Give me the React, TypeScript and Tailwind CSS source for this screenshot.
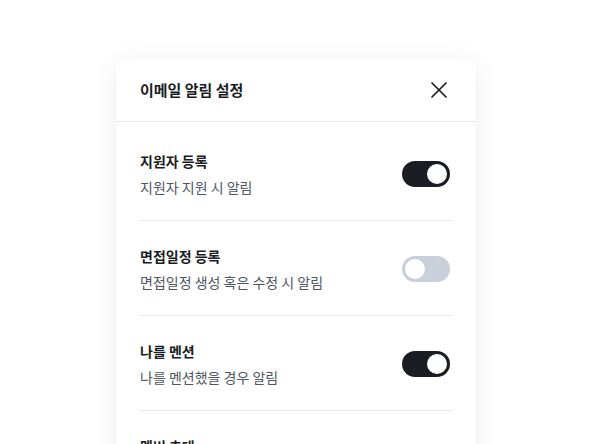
import { useState } from 'react'

type Item = { title: string; desc: string; on: boolean }

const items: Item[] = [
  { title: '지원자 등록', desc: '지원자 지원 시 알림', on: true },
  { title: '면접일정 등록', desc: '면접일정 생성 혹은 수정 시 알림', on: false },
  { title: '나를 멘션', desc: '나를 멘션했을 경우 알림', on: true },
  { title: '멤버 초대', desc: '멤버 초대 시 알림', on: true },
]

function Toggle({ on, onClick }: { on: boolean; onClick: () => void }) {
  return (
    <button
      onClick={onClick}
      className={`relative flex h-[26px] w-[48px] shrink-0 items-center rounded-full px-[1px] ${
        on ? 'justify-end bg-[#1a1d23]' : 'justify-start bg-[#c9d0da]'
      }`}
    >
      <span
        className={`block h-[24px] w-[24px] rounded-full bg-white border-2 ${
          on ? 'border-[#1a1d23]' : 'border-[#c9d0da]'
        }`}
      />
    </button>
  )
}

export default function App() {
  const [state, setState] = useState(items.map((i) => i.on))

  return (
    <div
      className="h-[444px] w-full overflow-hidden bg-white pt-[59px]"
      style={{ fontFamily: '"Noto Sans CJK KR", "Noto Sans", sans-serif' }}
    >
      <div className="mx-auto w-[360px] rounded-t-[10px] bg-white shadow-[0_4px_24px_rgba(0,0,0,0.08)] pb-10">
        {/* header */}
        <div className="flex h-[63px] items-center justify-between border-b border-[#e3e8ef] pl-6 pr-[28px]">
          <h2 className="text-[15px] font-bold text-[#1a1d23]">이메일 알림 설정</h2>
          <button className="text-[#1a1d23]">
            <svg width="18" height="18" viewBox="0 0 18 18" fill="none" stroke="currentColor" strokeWidth="1.7" strokeLinecap="round">
              <path d="M2 2L16 16M16 2L2 16" />
            </svg>
          </button>
        </div>

        {/* list */}
        <div className="px-6 pt-[4px]">
          {items.map((item, i) => (
            <div key={item.title} className="flex items-center justify-between border-b border-[#e3e8ef] pt-6 pb-[23px] pr-[2px]">
              <div>
                <div className="text-[14px] font-bold leading-[22px] text-[#1a1d23]">{item.title}</div>
                <div className="mt-[5px] text-[14px] leading-[20px] text-[#4e5661]">{item.desc}</div>
              </div>
              <Toggle
                on={state[i]}
                onClick={() => setState((s) => s.map((v, j) => (j === i ? !v : v)))}
              />
            </div>
          ))}
        </div>
      </div>
    </div>
  )
}
